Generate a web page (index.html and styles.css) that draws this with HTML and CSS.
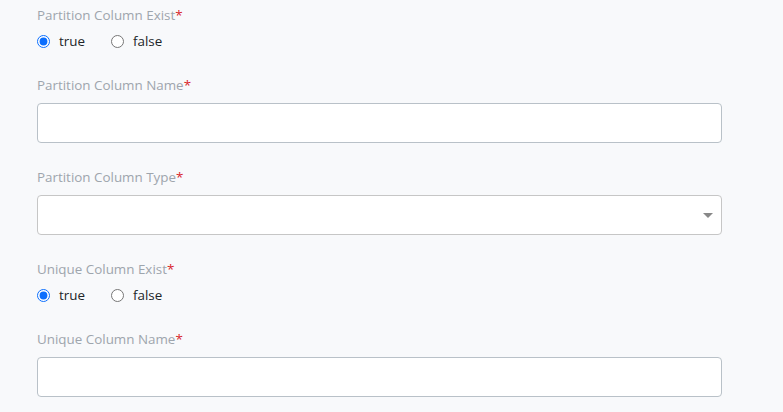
FILE: index.html
```html
<!DOCTYPE html>
<html>
<head>
<meta charset="utf-8">
<link rel="stylesheet" href="styles.css">
</head>
<body>
<div class="form">
  <div class="group">
    <div class="label">Partition Column Exist<span class="req">*</span></div>
    <div class="radios">
      <label class="radio"><input type="radio" name="p" checked><span>true</span></label>
      <label class="radio"><input type="radio" name="p"><span>false</span></label>
    </div>
  </div>
  <div class="group">
    <div class="label">Partition Column Name<span class="req">*</span></div>
    <div class="input"></div>
  </div>
  <div class="group">
    <div class="label">Partition Column Type<span class="req">*</span></div>
    <div class="select"><span class="caret"></span></div>
  </div>
  <div class="group">
    <div class="label">Unique Column Exist<span class="req">*</span></div>
    <div class="radios">
      <label class="radio"><input type="radio" name="u" checked><span>true</span></label>
      <label class="radio"><input type="radio" name="u"><span>false</span></label>
    </div>
  </div>
  <div class="group">
    <div class="label">Unique Column Name<span class="req">*</span></div>
    <div class="input"></div>
  </div>
</div>
</body>
</html>
```
FILE: styles.css
```css
html, body {
  margin: 0;
  padding: 0;
  background: #f8f9fb;
  font-family: "Open Sans", "Noto Sans", sans-serif;
}
.form {
  padding: 5px 0 0 37px;
  width: 685px;
}
.group {
  margin-bottom: 24px;
}
.label {
  font-size: 13.4px;
  line-height: 20px;
  color: #9ea5ad;
  margin-bottom: 8px;
}
.req {
  color: #d9262c;
}
.radios {
  display: flex;
  gap: 26px;
  margin-top: -2px;
  height: 20px;
  align-items: center;
}
.radio {
  display: flex;
  align-items: center;
  font-size: 13.4px;
  color: #212529;
}
.radio input {
  margin: 0 9px 0 0;
  width: 13px;
  height: 13px;
  accent-color: #0b6efd;
}
.input, .select {
  box-sizing: border-box;
  height: 40px;
  background: #fff;
  border: 1px solid #b9c1c8;
  border-radius: 4px;
}
.select {
  border-color: #c6c6c6;
  position: relative;
}
.caret {
  position: absolute;
  right: 8px;
  top: 17px;
  width: 0;
  height: 0;
  border-left: 5px solid transparent;
  border-right: 5px solid transparent;
  border-top: 5px solid #888;
}
```
